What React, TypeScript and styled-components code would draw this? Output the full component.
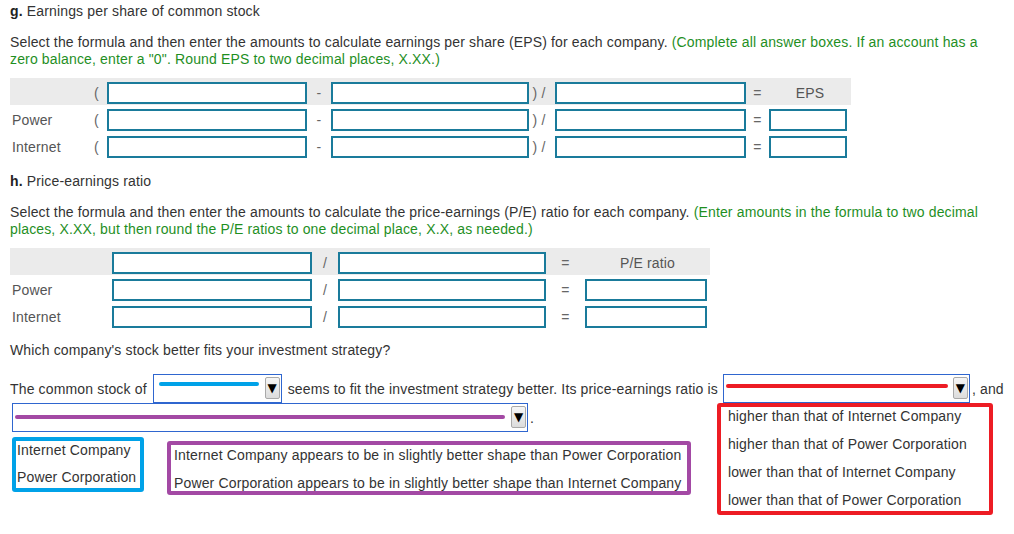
import React from "react";
import styled, { createGlobalStyle } from "styled-components";

const GlobalStyle = createGlobalStyle`
  html, body {
    margin: 0;
    padding: 0;
    background: #fff;
  }
  body {
    font-family: "Liberation Sans", Arial, sans-serif;
    font-size: 14px;
    letter-spacing: 0.15px;
    color: #333;
  }
`;

const Page = styled.div`
  width: 1014px;
  min-height: 534px;
  box-sizing: border-box;
  padding: 3px 10px 0;
`;

const Heading = styled.div<{ $top?: number }>`
  line-height: 17px;
  margin-top: ${(p) => p.$top ?? 0}px;
  color: #333;

  b {
    color: #222;
  }
`;

const Instructions = styled.p`
  margin: 14px 0 0;
  max-width: 980px;
  line-height: 17px;
`;

const Hint = styled.span`
  color: #1f8f1f;
`;

const FormulaTable = styled.div`
  margin-top: 10px;
`;

const Row = styled.div<{ $cols: string; $head?: boolean }>`
  display: grid;
  grid-template-columns: ${(p) => p.$cols};
  width: fit-content;
  height: 27px;
  background: ${(p) => (p.$head ? "#ebebeb" : "transparent")};
`;

const Cell = styled.div`
  padding-top: 4px;
  height: 22px;
  line-height: 22px;
`;

const RowLabel = styled(Cell)`
  padding-left: 2px;
  color: #555;
`;

const Sym = styled(Cell)<{ $shift?: number }>`
  text-align: center;
  color: #666;
  padding-right: ${(p) => p.$shift ?? 0}px;
`;

const ColHead = styled(Cell)`
  text-align: center;
  color: #555;
`;

const Input = styled.input<{ $w?: number }>`
  display: block;
  box-sizing: border-box;
  width: ${(p) => (p.$w ? `${p.$w}px` : "100%")};
  height: 22px;
  margin: 0;
  padding: 0 4px;
  border: 2px solid #1a7b9b;
  background: #fff;
  font: inherit;
  outline: none;
`;

const Question = styled.div`
  margin-top: 13px;
  line-height: 17px;
`;

const SentenceLine = styled.div<{ $top?: number }>`
  display: flex;
  align-items: center;
  height: 29px;
  margin-top: ${(p) => p.$top ?? 0}px;
  white-space: nowrap;
`;

const Select = styled.div<{ $w: number; $ml?: number; $mr?: number }>`
  position: relative;
  display: flex;
  align-items: flex-start;
  box-sizing: border-box;
  width: ${(p) => p.$w}px;
  height: 29px;
  margin-left: ${(p) => p.$ml ?? 0}px;
  margin-right: ${(p) => p.$mr ?? 0}px;
  border: 1px solid #2f66cf;
  background: #fff;
`;

const Scribble = styled.span<{ $color: string; $w: number; $x: number; $y: number }>`
  display: block;
  width: ${(p) => p.$w}px;
  height: 4px;
  margin-left: ${(p) => p.$x}px;
  margin-top: ${(p) => p.$y}px;
  border-radius: 2px;
  background: ${(p) => p.$color};
`;

const ArrowButton = styled.span`
  display: flex;
  align-items: center;
  justify-content: center;
  box-sizing: border-box;
  width: 15px;
  height: 22px;
  margin: 2px 1px 0 auto;
  border: 1px solid #a9a9a9;
  border-radius: 2px;
  background: linear-gradient(#f6f6f6, #dcdcdc);
  color: #000;
  font-family: "DejaVu Sans", sans-serif;
  font-size: 12px;
  letter-spacing: 0;
`;

const Menu = styled.div`
  position: absolute;
  top: calc(100% + 1px);
  left: -7px;
  z-index: 2;
  box-sizing: border-box;
  width: 276px;
  height: 112px;
  border: 4px solid #ed1c24;
  border-radius: 3px;
  background: #fff;
`;

const MenuList = styled.div`
  margin-top: -5px;
  padding-left: 7px;
`;

const MenuOption = styled.div`
  height: 28px;
  line-height: 28px;
  color: #333;
`;

const ListRow = styled.div`
  display: flex;
  align-items: flex-start;
  margin: 5px 0 0 2px;
`;

const ListBox = styled.div<{ $color: string; $w: number; $ml?: number; $mt?: number; $pl: number; $pitch: number }>`
  box-sizing: border-box;
  width: ${(p) => p.$w}px;
  margin-left: ${(p) => p.$ml ?? 0}px;
  margin-top: ${(p) => p.$mt ?? 0}px;
  padding-left: ${(p) => p.$pl}px;
  border: 4px solid ${(p) => p.$color};
  border-radius: 3px;
  background: #fff;

  div {
    height: ${(p) => p.$pitch}px;
    line-height: ${(p) => p.$pitch}px;
    white-space: nowrap;
    color: #333;
  }
  div:first-child {
    margin-top: -4px;
  }
  div:last-child {
    margin-bottom: ${(p) => (p.$pitch === 27 ? -3 : -6)}px;
  }
`;

const Arrow = () => <ArrowButton>▼</ArrowButton>;

const epsCols = "76px 21px 200px 24px 198px 26px 191px 23px 82px";
const peCols = "102px 200px 26px 208px 39px 125px";

function EpsRow({ label }: { label?: string }) {
  return (
    <Row $cols={epsCols} $head={!label}>
      <RowLabel>{label}</RowLabel>
      <Sym>(</Sym>
      <Cell>
        <Input />
      </Cell>
      <Sym>-</Sym>
      <Cell>
        <Input />
      </Cell>
      <Sym $shift={6}>) /</Sym>
      <Cell>
        <Input />
      </Cell>
      <Sym>=</Sym>
      {label ? (
        <Cell>
          <Input $w={78} />
        </Cell>
      ) : (
        <ColHead>EPS</ColHead>
      )}
    </Row>
  );
}

function PeRow({ label }: { label?: string }) {
  return (
    <Row $cols={peCols} $head={!label}>
      <RowLabel>{label}</RowLabel>
      <Cell>
        <Input />
      </Cell>
      <Sym>/</Sym>
      <Cell>
        <Input />
      </Cell>
      <Sym>=</Sym>
      {label ? (
        <Cell>
          <Input $w={122} />
        </Cell>
      ) : (
        <ColHead>P/E ratio</ColHead>
      )}
    </Row>
  );
}

const ratioOptions = [
  "higher than that of Internet Company",
  "higher than that of Power Corporation",
  "lower than that of Internet Company",
  "lower than that of Power Corporation",
];

export default function App() {
  return (
    <Page>
      <GlobalStyle />

      <Heading>
        <b>g.</b> Earnings per share of common stock
      </Heading>
      <Instructions>
        Select the formula and then enter the amounts to calculate earnings per share (EPS) for each company.{" "}
        <Hint>
          (Complete all answer boxes. If an account has a zero balance, enter a "0". Round EPS to two decimal
          places, X.XX.)
        </Hint>
      </Instructions>
      <FormulaTable>
        <EpsRow />
        <EpsRow label="Power" />
        <EpsRow label="Internet" />
      </FormulaTable>

      <Heading $top={14}>
        <b>h.</b> Price-earnings ratio
      </Heading>
      <Instructions>
        Select the formula and then enter the amounts to calculate the price-earnings (P/E) ratio for each company.{" "}
        <Hint>
          (Enter amounts in the formula to two decimal places, X.XX, but then round the P/E ratios to one decimal
          place, X.X, as needed.)
        </Hint>
      </Instructions>
      <FormulaTable>
        <PeRow />
        <PeRow label="Power" />
        <PeRow label="Internet" />
      </FormulaTable>

      <Question>Which company's stock better fits your investment strategy?</Question>

      <SentenceLine $top={15}>
        The common stock of
        <Select $w={129} $ml={6} $mr={6}>
          <Scribble $color="#00a2e8" $w={100} $x={5} $y={7} />
          <Arrow />
        </Select>
        seems to fit the investment strategy better. Its price-earnings ratio is
        <Select $w={247} $ml={5} $mr={2}>
          <Scribble $color="#ed1c24" $w={222} $x={2} $y={9} />
          <Arrow />
          <Menu>
            <MenuList>
              {ratioOptions.map((o) => (
                <MenuOption key={o}>{o}</MenuOption>
              ))}
            </MenuList>
          </Menu>
        </Select>
        , and
      </SentenceLine>
      <SentenceLine>
        <Select $w={516} $ml={2} $mr={2}>
          <Scribble $color="#a349a4" $w={490} $x={2} $y={11} />
          <Arrow />
        </Select>
        .
      </SentenceLine>

      <ListRow>
        <ListBox $color="#00a2e8" $w={132} $pl={1} $pitch={27}>
          <div>Internet Company</div>
          <div>Power Corporation</div>
        </ListBox>
        <ListBox $color="#a349a4" $w={524} $ml={23} $mt={4} $pl={3} $pitch={28}>
          <div>Internet Company appears to be in slightly better shape than Power Corporation</div>
          <div>Power Corporation appears to be in slightly better shape than Internet Company</div>
        </ListBox>
      </ListRow>
    </Page>
  );
}
